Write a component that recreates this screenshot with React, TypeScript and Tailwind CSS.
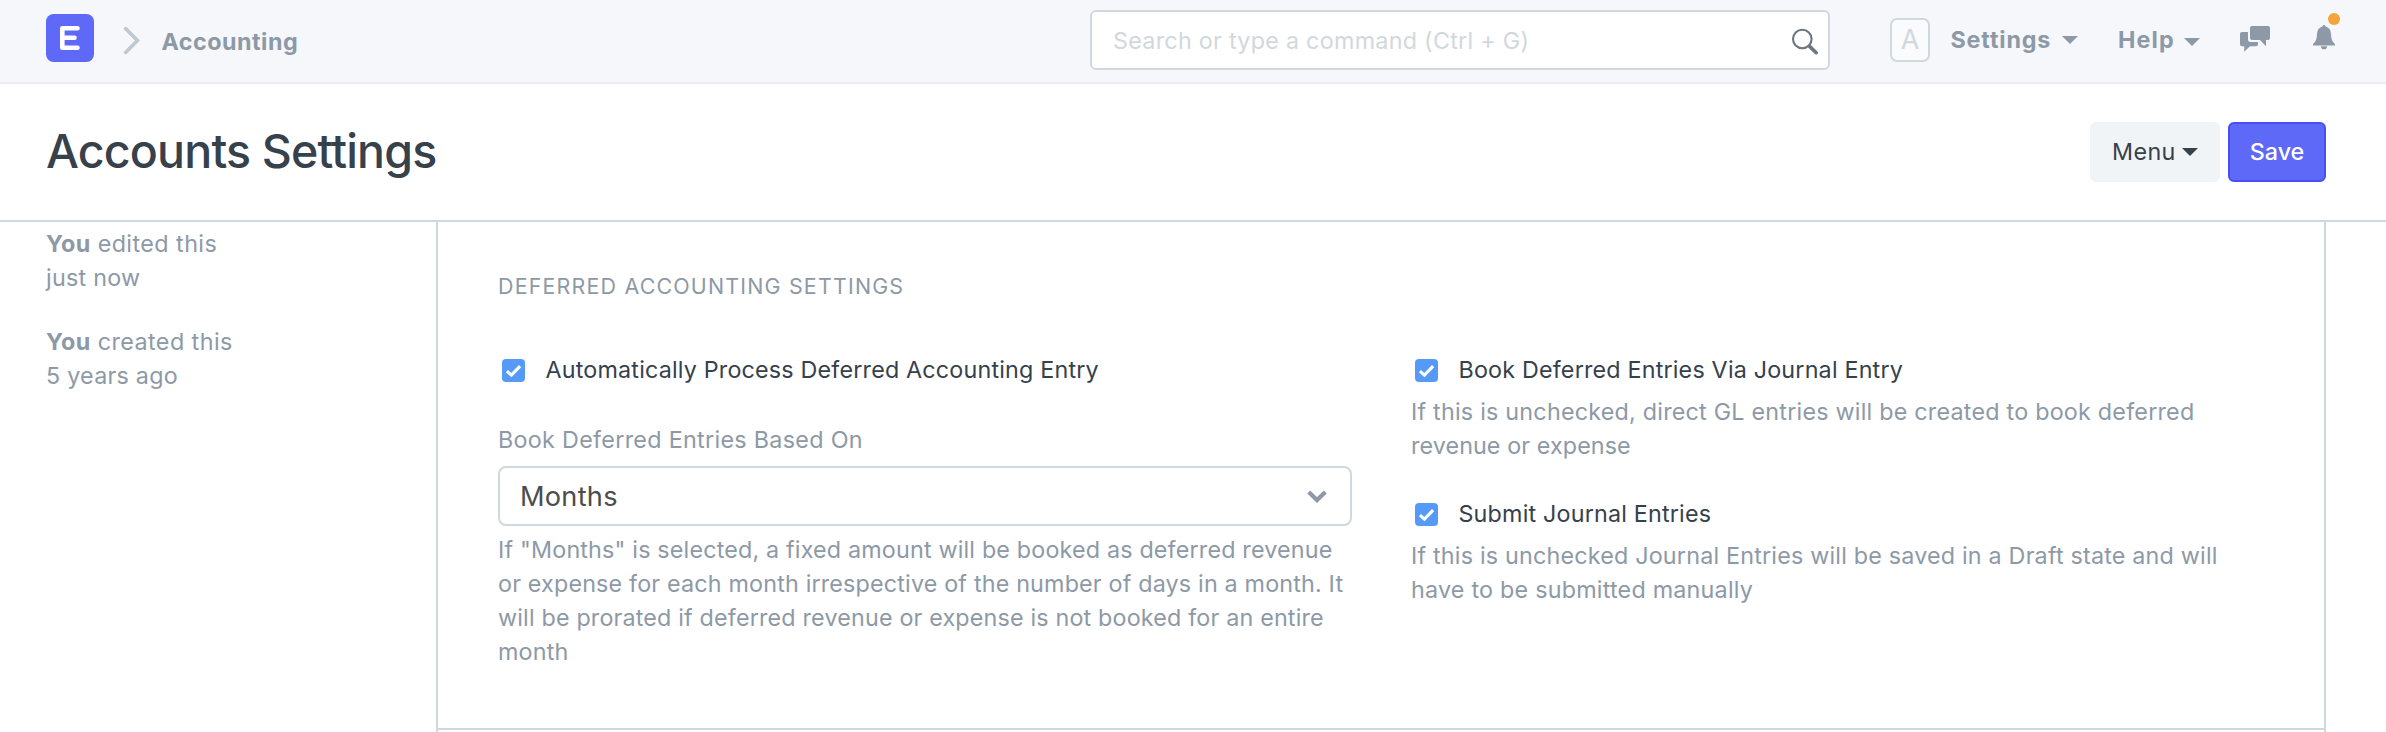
import type { ReactNode } from "react";

function Caret({ className = "" }: { className?: string }) {
  return (
    <svg viewBox="0 0 16 8" className={`h-2 w-4 shrink-0 ${className}`} fill="currentColor">
      <path d="M0 0h16L8 8z" />
    </svg>
  );
}

function Navbar() {
  return (
    <nav className="flex h-[84px] shrink-0 items-start border-b-2 border-[#ebeef0] bg-[#f5f7fa] font-bold text-[#8d99a6]">
      <div className="flex w-[1090px] shrink-0 items-start pl-[46px]">
        <svg viewBox="0 0 48 48" className="mt-[14px] size-12">
          <rect width="48" height="48" rx="7.5" fill="#5e69f7" />
          <path d="M31.5 14.3H16.3v19.4h15.2M16.3 23.8h12.2" fill="none" stroke="#fff" strokeWidth="4.6" strokeLinecap="round" strokeLinejoin="round" />
        </svg>
        <svg viewBox="0 0 20 28" className="ml-7 mt-[27px] h-7 w-5" fill="none" stroke="#c0c8d0" strokeWidth="3.6">
          <path d="M3.6 1.6 15.4 13.5 3.6 25.4" strokeLinecap="round" />
        </svg>
        <span className="ml-[19.5px] mt-[25px] text-[23.3px] leading-[34px] tracking-[0.5px]">Accounting</span>
      </div>
      <div className="mt-[10px] flex h-[60px] w-[740px] shrink-0 items-center justify-between rounded-[6px] border-2 border-[#d1d8dd] bg-white pl-[21px] pr-[9px] font-normal">
        <span className="mt-[2px] text-[23.3px] leading-[34px] tracking-[0.28px] text-[#d1d8dd]">Search or type a command (Ctrl + G)</span>
        <svg viewBox="0 0 28 28" className="mt-[3px] size-7" fill="none" stroke="#6c7680">
          <circle cx="11.3" cy="11" r="9.3" strokeWidth="2.1" />
          <path d="m18.6 18.4 6.6 6.3" strokeWidth="3.6" strokeLinecap="round" />
        </svg>
      </div>
      <div className="ml-[60px] mt-[18px] flex h-11 w-10 items-center justify-center rounded-[7px] border-2 border-[#d1d8dd] bg-[#fafbfc] text-[27px] font-normal leading-[40px] text-[#d1d8dd]">
        A
      </div>
      <div className="ml-[20.5px] mt-[23px] flex w-[127.5px] items-start justify-between">
        <span className="text-[23.3px] leading-[34px] tracking-[0.85px]">Settings</span>
        <Caret className="mt-[13px]" />
      </div>
      <div className="ml-[40px] mt-[23px] flex w-[82px] items-start justify-between">
        <span className="text-[23.3px] leading-[34px] tracking-[1.1px]">Help</span>
        <Caret className="mt-[15px]" />
      </div>
      <svg viewBox="0 0 30 26" className="ml-10 mt-[26px] h-[26px] w-[30px]" fill="currentColor">
        <path d="M12 0h16a2 2 0 0 1 2 2v10a2 2 0 0 1-2 2h-2v6.2L20 14h-8a2 2 0 0 1-2-2V2a2 2 0 0 1 2-2z" />
        <path d="M2 6h6v7.2A2.8 2.8 0 0 0 10.8 16H18v2.2a2 2 0 0 1-2 2h-6L4.2 25.8v-5.6H2a2 2 0 0 1-2-2V8a2 2 0 0 1 2-2z" />
      </svg>
      <div className="relative ml-[42px] mt-[25px]">
        <svg viewBox="0 0 24 25" className="h-[25px] w-6" fill="currentColor">
          <path d="M12 0c.9 0 1.4.7 1.5 1.6 3.6.8 5.2 3.4 5.5 7.4.3 4.7.9 7.5 4 10v1.5H1V19c3.1-2.5 3.7-5.3 4-10 .3-4 1.9-6.6 5.5-7.4C10.6.7 11.1 0 12 0z" />
          <path d="M8.9 21.2h6.2a3.1 3.1 0 0 1-6.2 0z" />
        </svg>
        <span className="absolute -top-3 left-4 size-3 rounded-full bg-[#f5a33b]" />
      </div>
    </nav>
  );
}

function PageHead() {
  return (
    <header className="flex h-[138px] shrink-0 items-start border-b-2 border-[#d1d8dd] pl-[46px] pr-[60px]">
      <h1 className="mt-[35px] flex-1 text-[46.5px] font-[550] leading-[64px] tracking-[-0.82px] text-[#36414c]">Accounts Settings</h1>
      <button className="mt-[38px] flex h-[60px] w-[130px] items-center justify-between rounded-[6px] bg-[#f0f4f7] px-[22px] text-[23.3px] leading-[34px] tracking-[0.4px] text-[#36414c]">
        Menu
        <Caret />
      </button>
      <button className="ml-2 mt-[38px] h-[60px] w-[98px] rounded-[6px] border-2 border-[#444ff5] bg-[#5e69f7] text-[23.3px] font-medium leading-[34px] text-white">
        Save
      </button>
    </header>
  );
}

function Check({ children }: { children: ReactNode }) {
  return (
    <label className="flex h-[34px] items-start text-[23.3px] leading-[34px] tracking-[0.19px] text-[#36414c]">
      <svg viewBox="0 0 23 23" className="ml-[3.6px] mt-[6px] size-[23px]">
        <rect width="23" height="23" rx="4" fill="#559af8" />
        <path d="m4.9 12.2 4.5 4 8.7-9" fill="none" stroke="#fff" strokeWidth="3.1" />
      </svg>
      <span className="ml-[20.9px]">{children}</span>
    </label>
  );
}

function Sidebar() {
  return (
    <aside className="w-[436px] shrink-0 pl-[46px] pt-[5px] text-[23.3px] leading-[34px] tracking-[0.45px] text-[#8d99a6]">
      <p>
        <b>You</b> edited this
        <br />
        <span className="tracking-[0.25px]">just now</span>
      </p>
      <p className="mt-[30px]">
        <b>You</b> created this
        <br />
        <span className="tracking-[0.25px]">5 years ago</span>
      </p>
    </aside>
  );
}

function FormSection() {
  return (
    <main className="flex w-[1890px] shrink-0 flex-col border-x-2 border-[#d1d8dd]">
      <section className="h-[508px] border-b-2 border-[#d1d8dd] pl-[60px] pt-[47px]">
        <h2 className="text-[21.4px] leading-[34px] tracking-[1.2px] text-[#8d99a6]">DEFERRED ACCOUNTING SETTINGS</h2>
        <div className="mt-[50px] flex text-[23.3px] leading-[34px] text-[#8d99a6]">
          <div className="w-[854px]">
            <Check>Automatically Process Deferred Accounting Entry</Check>
            <div className="mt-9 tracking-[0.31px]">Book Deferred Entries Based On</div>
            <div className="mt-[9px] flex h-[60px] items-center justify-between rounded-[8px] border-2 border-[#d1d8dd] pl-[20px] pr-[23px] text-[27.2px] tracking-[0.25px] text-[#4c4c4c]">
              <span className="mt-px">Months</span>
              <svg viewBox="0 0 20 13" className="mt-px h-[13px] w-5" fill="none" stroke="#8d99a6" strokeWidth="4.3">
                <path d="M1.7 2 10 10 18.3 2" />
              </svg>
            </div>
            <p className="mt-[7px] whitespace-nowrap tracking-[0.18px]">
              If "Months" is selected, a fixed amount will be booked as deferred revenue
              <br />
              or expense for each month irrespective of the number of days in a month. It
              <br />
              will be prorated if deferred revenue or expense is not booked for an entire
              <br />
              month
            </p>
          </div>
          <div className="ml-[59px] w-[854px] tracking-[0.23px]">
            <Check>Book Deferred Entries Via Journal Entry</Check>
            <p className="mt-2 whitespace-nowrap">
              If this is unchecked, direct GL entries will be created to book deferred
              <br />
              <span className="tracking-[0.1px]">revenue or expense</span>
            </p>
            <div className="mt-[34px]">
              <Check>Submit Journal Entries</Check>
            </div>
            <p className="mt-2 whitespace-nowrap">
              <span className="tracking-[0.2px]">If this is unchecked Journal Entries will be saved in a Draft state and will</span>
              <br />
              have to be submitted manually
            </p>
          </div>
        </div>
      </section>
    </main>
  );
}

export default function App() {
  return (
    <div className="flex h-[732px] w-[2386px] flex-col overflow-hidden bg-white font-['Inter','Liberation_Sans',sans-serif] antialiased">
      <Navbar />
      <PageHead />
      <div className="flex flex-1">
        <Sidebar />
        <FormSection />
      </div>
    </div>
  );
}
